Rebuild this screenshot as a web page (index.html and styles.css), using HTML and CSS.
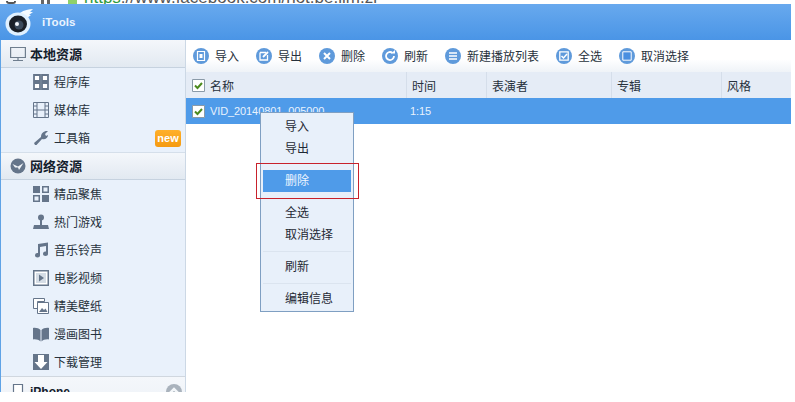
FILE: index.html
```html
<!DOCTYPE html>
<html lang="zh-CN">
<head>
<meta charset="utf-8">
<title>iTools</title>
<link rel="stylesheet" href="styles.css">
</head>
<body>
<div class="strip">
  <div class="strip-reload"></div>
  <div class="strip-pause"></div>
  <div class="strip-lock"></div>
  <div class="strip-url"><span class="strip-https">https</span>://www.facebook.com/hot.be.lim.zl</div>
</div>
<div class="app">
  <header class="header">
    <svg class="logo" viewBox="0 0 28 28" width="28" height="28">
      <path d="M15 5 C19 2 24 1 28 1 L25 4 L28 4 L24 7 L26 7 L22 10 Z" fill="#f4faff"/>
      <ellipse cx="13" cy="16" rx="12.500" ry="11.500" fill="#dff0ff"/>
      <ellipse cx="13" cy="16" rx="9" ry="8.500" fill="#1a1f27"/>
      <circle cx="14" cy="17" r="4.500" fill="#3b4a5c"/>
      <circle cx="12" cy="16" r="2" fill="#f2f6fa"/>
    </svg>
    <span class="brand">iTools</span>
  </header>
  <div class="body">
    <aside class="sidebar">
      <div class="section">
        <svg class="ic" viewBox="0 0 16 16" width="16" height="16"><path d="M.6 1.500h14.800v10H.6zM8 11.500v3M3 14.500h10" fill="none" stroke="#6f7e8e" stroke-width="1.200"/></svg>
        <span>本地资源</span>
      </div>
      <div class="item">
        <svg class="ic" viewBox="0 0 16 16" width="16" height="16"><path d="M1 1h6v6H1zM9 1h6v6H9zM1 9h6v6H1zM9 9h6v6H9z" fill="#fff" stroke="#65758a" stroke-width="1.800"/></svg>
        <span>程序库</span>
      </div>
      <div class="item">
        <svg class="ic" viewBox="0 0 16 16" width="16" height="16"><path d="M.5.5h15v15H.5zM4 .5v15M12 .5v15M.5 4H4M.5 8H4M.5 12H4M12 4h3.500M12 8h3.500M12 12h3.500M4 8h8" fill="none" stroke="#65758a"/></svg>
        <span>媒体库</span>
      </div>
      <div class="item">
        <svg class="ic" viewBox="0 0 16 16" width="16" height="16"><path d="M2 15 L1 13 L8 7 C8 3 11 0.500 15 1 L12 4 L13 6 L15 5 C15 8 12 10 9 9 L3.500 15 Z" fill="#65758a"/></svg>
        <span>工具箱</span>
        <b class="new">new</b>
      </div>
      <div class="section section-next">
        <svg class="ic" viewBox="0 0 16 16" width="16" height="16"><circle cx="8" cy="8" r="7.500" fill="#65758a"/><path d="M2.500 6 L8 8.500 L13.500 5 L9 12 L8 9.500 L5 9.500 Z" fill="#f0f4f8"/></svg>
        <span>网络资源</span>
      </div>
      <div class="item">
        <svg class="ic" viewBox="0 0 16 16" width="16" height="16"><path d="M0 0h7v7H0zM9 0h7v7H9zM0 9h7v7H0zM9 9h7v7H9z" fill="#65758a"/><path d="M10.500 1.500h4v4h-4zM1.500 10.500h4v4h-4z" fill="#e9f1fb"/></svg>
        <span>精品聚焦</span>
      </div>
      <div class="item">
        <svg class="ic" viewBox="0 0 16 16" width="16" height="16"><circle cx="8" cy="3.500" r="3" fill="#65758a"/><path d="M7 6h2v5h6l1 4H0l1-4h6z" fill="#65758a"/></svg>
        <span>热门游戏</span>
      </div>
      <div class="item">
        <svg class="ic" viewBox="0 0 16 16" width="16" height="16"><path d="M5 2 L15 0.500 V11.500 A2.500 2.300 0 1 1 13 9.500 V4 L7 5 V13 A2.500 2.300 0 1 1 5 11 Z" fill="#65758a"/></svg>
        <span>音乐铃声</span>
      </div>
      <div class="item">
        <svg class="ic" viewBox="0 0 16 16" width="16" height="16"><path d="M.75.75h14.500v14.500H.75z" fill="#fff" stroke="#65758a" stroke-width="1.500"/><path d="M3 3h10v10H3z" fill="#d5dde6"/><path d="M6 4.500v7l5-3.500z" fill="#65758a"/></svg>
        <span>电影视频</span>
      </div>
      <div class="item">
        <svg class="ic" viewBox="0 0 16 16" width="16" height="16"><path d="M.5.5h11v3h-7v7h-4z" fill="#fff" stroke="#65758a"/><path d="M4.500 4.500h11v11h-11z" fill="#fff" stroke="#65758a"/><path d="M6 14l3-4 2 2 1.500-1.500L14.500 14z" fill="#65758a"/></svg>
        <span>精美壁纸</span>
      </div>
      <div class="item">
        <svg class="ic" viewBox="0 0 16 16" width="16" height="16"><path d="M0 2 C3 1.500 6 2.500 7.500 4 V15.500 C6 14 3 13 0 13.500zM16 2 C13 1.500 10 2.500 8.500 4 V15.500 C10 14 13 13 16 13.500z" fill="#65758a"/></svg>
        <span>漫画图书</span>
      </div>
      <div class="item">
        <svg class="ic" viewBox="0 0 16 16" width="16" height="16"><path d="M0 0h16v16H0z" fill="#65758a"/><path d="M5 1h6v7h3.500L8 15 1.500 8H5z" fill="#fff"/></svg>
        <span>下载管理</span>
      </div>
      <div class="section section-last">
        <svg class="ic" viewBox="0 0 16 16" width="16" height="16"><path d="M3.500.5h9v15h-9z" fill="#fff" stroke="#65758a" stroke-width="1.200"/></svg>
        <span class="section-phone">iPhone</span>
        <svg class="chev" viewBox="0 0 16 16" width="16" height="16"><circle cx="8" cy="8" r="8" fill="#a9b2bc"/><path d="M3 10 L8 5 L13 10" fill="none" stroke="#f3f6f9" stroke-width="2.500"/></svg>
      </div>
    </aside>
    <main class="main">
      <div class="toolbar">
        <div class="tool">
          <svg class="tool-ic" viewBox="0 0 16 16" width="16" height="16"><circle cx="8" cy="8" r="8" fill="#5f9adb"/><path d="M4.500 3.500h7v9h-7z" fill="none" stroke="#fff" stroke-width="1.200"/><path d="M6.500 6h3v4h-3z" fill="#fff"/></svg>
          <span>导入</span>
        </div>
        <div class="tool">
          <svg class="tool-ic" viewBox="0 0 16 16" width="16" height="16"><circle cx="8" cy="8" r="8" fill="#5f9adb"/><path d="M4 4.500h6M4 4.500v7.500h7.500V7" fill="none" stroke="#fff" stroke-width="1.300"/><path d="M7 9 L12 4" stroke="#fff" stroke-width="1.800"/></svg>
          <span>导出</span>
        </div>
        <div class="tool">
          <svg class="tool-ic" viewBox="0 0 16 16" width="16" height="16"><circle cx="8" cy="8" r="8" fill="#5f9adb"/><path d="M5 5l6 6M11 5l-6 6" stroke="#fff" stroke-width="2"/></svg>
          <span>删除</span>
        </div>
        <div class="tool">
          <svg class="tool-ic" viewBox="0 0 16 16" width="16" height="16"><circle cx="8" cy="8" r="8" fill="#5f9adb"/><path d="M12 8a4 4 0 1 1-1.500-3.100" fill="none" stroke="#fff" stroke-width="1.800"/><path d="M9 5.500h4V2z" fill="#fff"/></svg>
          <span>刷新</span>
        </div>
        <div class="tool">
          <svg class="tool-ic" viewBox="0 0 16 16" width="16" height="16"><circle cx="8" cy="8" r="8" fill="#5f9adb"/><path d="M4 5h8M4 8h8M4 11h8" stroke="#fff" stroke-width="1.700"/></svg>
          <span>新建播放列表</span>
        </div>
        <div class="tool">
          <svg class="tool-ic" viewBox="0 0 16 16" width="16" height="16"><circle cx="8" cy="8" r="8" fill="#5f9adb"/><path d="M3.800 3.800h8.400v8.400H3.800z" fill="none" stroke="#fff" stroke-width="1.300"/><path d="M5.500 8l2 2 3.500-4" fill="none" stroke="#fff" stroke-width="1.500"/></svg>
          <span>全选</span>
        </div>
        <div class="tool">
          <svg class="tool-ic" viewBox="0 0 16 16" width="16" height="16"><circle cx="8" cy="8" r="8" fill="#5f9adb"/><path d="M3.800 3.800h8.400v8.400H3.800z" fill="#4a8fe0" stroke="#fff" stroke-width="1"/></svg>
          <span>取消选择</span>
        </div>
      </div>
      <div class="grid-row grid-head">
        <div class="cell cell-first">
          <svg class="check" viewBox="0 0 13 13" width="13" height="13"><path d="M.5.500h12v12H.5z" fill="#fff" stroke="#8a9aa8"/><path d="M3 6.500l2.500 2.500 4.500-5" fill="none" stroke="#4c8a1e" stroke-width="2"/></svg>
          <span>名称</span>
        </div>
        <div class="cell">时间</div>
        <div class="cell">表演者</div>
        <div class="cell">专辑</div>
        <div class="cell">风格</div>
      </div>
      <div class="grid-row grid-selected">
        <div class="cell cell-first">
          <svg class="check" viewBox="0 0 13 13" width="13" height="13"><path d="M.5.500h12v12H.5z" fill="#fff" stroke="#8a9aa8"/><path d="M3 6.500l2.500 2.500 4.500-5" fill="none" stroke="#4c8a1e" stroke-width="2"/></svg>
          <span class="latin">VID_20140801_005000</span>
        </div>
        <div class="cell cell-time latin">1:15</div>
        <div class="cell"></div>
        <div class="cell"></div>
        <div class="cell"></div>
      </div>
      <div class="menu">
        <div class="menu-item">导入</div>
        <div class="menu-item">导出</div>
        <div class="menu-gap"></div>
        <div class="menu-item menu-active">删除</div>
        <div class="menu-gap"></div>
        <div class="menu-item">全选</div>
        <div class="menu-item">取消选择</div>
        <div class="menu-sep"></div>
        <div class="menu-item">刷新</div>
        <div class="menu-sep"></div>
        <div class="menu-item">编辑信息</div>
      </div>
      <div class="annotation"></div>
    </main>
  </div>
</div>
</body>
</html>
```
FILE: styles.css
```css
* { box-sizing: border-box; }
html, body { margin: 0; padding: 0; background: #fff; }
body {
  width: 795px;
  height: 402px;
  overflow: hidden;
  font-family: "Noto Sans CJK SC", "Liberation Sans", sans-serif;
  font-size: 12px;
  color: #1c2630;
}
.strip {
  height: 4px;
  display: flex;
  align-items: flex-end;
  overflow: hidden;
  padding-left: 6px;
}
.strip-reload { width: 10px; height: 3px; border: 2px solid #555; border-top: 0; border-radius: 0 0 6px 6px; }
.strip-pause { width: 9px; height: 4px; margin-left: 25px; border-left: 3px solid #666; border-right: 3px solid #666; }
.strip-lock { width: 9px; height: 4px; margin-left: 18px; background: #8fd16a; }
.strip-url {
  margin-left: 7px;
  margin-bottom: -2px;
  font-family: "Liberation Sans", sans-serif;
  font-size: 17px;
  line-height: 17px;
  color: #555;
  white-space: nowrap;
}
.strip-https { color: #2f9a3c; }
.app { width: 791px; height: 388px; overflow: hidden; display: flex; flex-direction: column; }
.header {
  height: 36px;
  flex: none;
  display: flex;
  align-items: center;
  padding-left: 5px;
  gap: 9px;
  background: linear-gradient(#68a9ee, #4a95e6);
}
.logo { flex: none; }
.brand { color: #eaf4ff; font: bold 11.5px "Liberation Sans", sans-serif; letter-spacing: .1px; }
.body { flex: 1; display: flex; position: relative; overflow: hidden; }
.sidebar {
  width: 186px;
  flex: none;
  display: flex;
  flex-direction: column;
  background: #e9f1fb;
  border-left: 1px solid #5fa3e6;
  border-right: 1px solid #ccd8e5;
}
.section {
  height: 28px;
  flex: none;
  display: flex;
  align-items: center;
  gap: 4px;
  padding-left: 9px;
  font-size: 13px;
  font-weight: 700;
  color: #14202c;
  background: linear-gradient(#f4f7fb, #e2e9f1);
  border-bottom: 1px solid #c6d2df;
}
.section-next { border-top: 1px solid #d5dfea; padding-bottom: 1px; }
.section-last { height: 30px; border-top: 1px solid #d0d7df; border-bottom: 0; background: linear-gradient(#f4f7fb, #eef2f7); }
.section-phone { font: bold 12px "Liberation Sans", sans-serif; }
.chev { margin-left: auto; margin-right: 3px; }
.item {
  height: 28px;
  flex: none;
  display: flex;
  align-items: center;
  gap: 5px;
  padding-left: 32px;
  color: #27313c;
}
.item span, .tool span { padding-bottom: 2px; }
.ic, .tool-ic, .check { flex: none; display: block; }
.new {
  margin-left: auto;
  margin-right: 4px;
  width: 26px;
  height: 17px;
  border-radius: 3px;
  background: linear-gradient(#ffb02a, #f59a10);
  color: #fff;
  font: bold 11px/17px "Liberation Sans", sans-serif;
  text-align: center;
}
.main { flex: 1; min-width: 0; display: flex; flex-direction: column; background: #fff; }
.toolbar {
  height: 32px;
  flex: none;
  display: flex;
  align-items: center;
  gap: 17px;
  padding-left: 7px;
  background: linear-gradient(#ffffff 60%, #eff3f8);
  color: #27313c;
}
.tool { display: flex; align-items: center; gap: 6px; }
.grid-row {
  display: grid;
  grid-template-columns: 220px 80px 125px 110px 1fr;
  flex: none;
}
.grid-head { height: 26px; background: #e5ecf6; color: #27313c; }
.grid-selected { height: 26px; background: #4f9be9; color: #e8f2fd; }
.cell { display: flex; align-items: center; padding-left: 5px; border-left: 1px solid transparent; }
.grid-head .cell { border-left-color: #d5deea; }
.grid-head .cell-first { border-left-color: transparent; }
.cell-first { gap: 5px; padding-left: 5px; }
.cell-time { padding-left: 3px; }
.latin { font-family: "Liberation Sans", sans-serif; font-size: 11px; letter-spacing: -.1px; }
.menu {
  position: absolute;
  left: 260px;
  top: 72px;
  width: 94px;
  height: 200px;
  padding: 3px 2px 0;
  background: #e8f0fa;
  border: 1px solid #7f9fc2;
}
.menu-item { height: 22px; line-height: 20px; padding-left: 22px; color: #1f2934; }
.menu-active { background: #4f9be9; color: #eef6ff; }
.menu-gap { height: 10px; }
.menu-sep { height: 10px; display: flex; align-items: center; }
.menu-sep::before { content: ""; flex: 1; height: 1px; background: #dbe4ef; }
.annotation {
  position: absolute;
  left: 256px;
  top: 123px;
  width: 103px;
  height: 36px;
  border: 1px solid #c8222c;
}
```
